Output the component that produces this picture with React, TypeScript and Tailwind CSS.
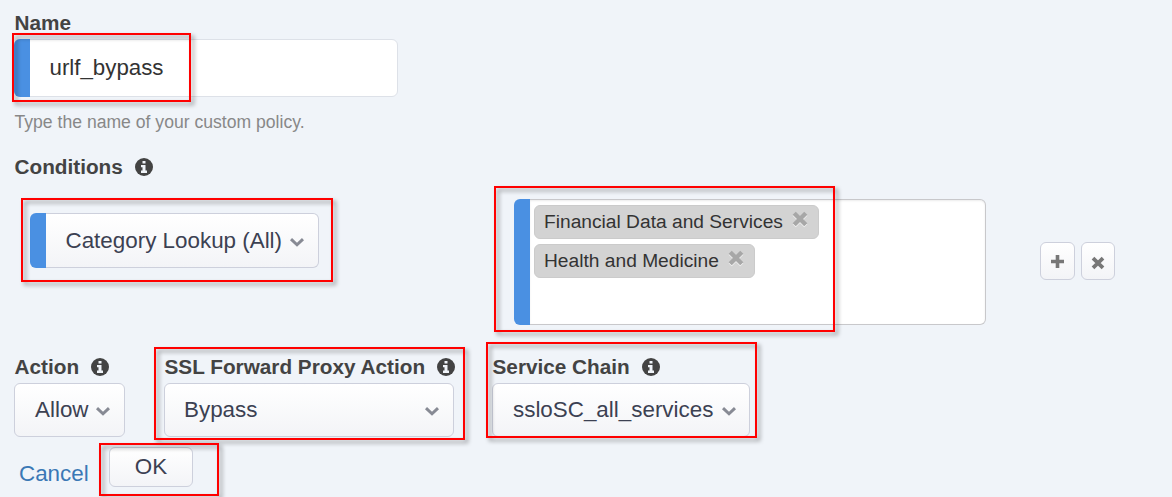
import type { ReactNode } from "react";

function Highlight({ className }: { className: string }) {
  return (
    <div
      className={`pointer-events-none absolute z-10 border-2 border-[#ff0000] drop-shadow-[3px_3px_2px_rgba(0,0,0,0.4)] ${className}`}
    />
  );
}

function InfoIcon() {
  return (
    <svg width="18" height="18" viewBox="0 0 18 18" className="-mt-px ml-[12px] shrink-0">
      <circle cx="9" cy="9" r="9" fill="#434343" />
      <path d="M7.5 3h3v2.5h-3zM6 7h4.5v5.6H12V15H6v-2.4h1.5V9.3H6z" fill="#f0f4f9" />
    </svg>
  );
}

function Label({ children, info = true }: { children: ReactNode; info?: boolean }) {
  return (
    <div className="flex h-6 items-center pl-[0.5px] whitespace-nowrap text-[20.75px] leading-6 font-bold text-[#434343]">
      <span>{children}</span>
      {info && <InfoIcon />}
    </div>
  );
}

function Chevron() {
  return (
    <svg width="14" height="9" viewBox="0 0 14 9" fill="none" className="mt-[3px] shrink-0">
      <path d="M1 1.2 7 6.8 13 1.2" stroke="#878a94" strokeWidth="3" />
    </svg>
  );
}

function Select({ label, className }: { label: string; className: string }) {
  return (
    <button
      className={`flex items-center justify-between rounded-md border border-[#cdd0dc] bg-linear-to-b from-white to-[#f3f4f7] text-[22.4px] whitespace-nowrap text-[#3c4152] ${className}`}
    >
      <span>{label}</span>
      <Chevron />
    </button>
  );
}

function Tag({ label, className }: { label: string; className: string }) {
  return (
    <div
      className={`flex h-[34px] items-center justify-between rounded-md border border-[#cbcbcb] bg-[#d3d3d3] pr-[10px] pl-[9px] text-[19.2px] whitespace-nowrap text-[#333] ${className}`}
    >
      <span>{label}</span>
      <svg
        width="16"
        height="16"
        viewBox="0 0 16 16"
        className="mb-[7px] drop-shadow-[0_1px_0_rgba(255,255,255,0.7)]"
      >
        <path d="M2.2 2.2 13.8 13.8M13.8 2.2 2.2 13.8" stroke="#a7a7a7" strokeWidth="4.4" />
      </svg>
    </div>
  );
}

function IconButton({ className, children }: { className: string; children: ReactNode }) {
  return (
    <button
      className={`flex h-[38px] items-center justify-center rounded-md border border-[#cdd0dc] bg-linear-to-b from-white to-[#f3f4f7] ${className}`}
    >
      {children}
    </button>
  );
}

export default function App() {
  return (
    <main className="h-[497px] w-[1172px] overflow-hidden bg-[#f0f4f9] pt-[11px] pl-[14px] font-['Liberation_Sans',Arial,sans-serif]">
      <Label info={false}>Name</Label>
      <div className="relative mt-1 flex h-[58px] w-[384px] overflow-visible rounded-md border border-[#dde1e8] bg-white">
        <div className="-my-px -ml-px w-4 rounded-l-md bg-[#4a90e2]" />
        <div className="flex items-center pb-px pl-[19.5px] text-[22.3px] text-[#333]">urlf_bypass</div>
        <Highlight className="-top-[7px] -left-[3px] h-[69px] w-[179px]" />
      </div>
      <div className="mt-[13px] h-6 pl-[0.5px] whitespace-nowrap text-[17.6px] leading-6 text-[#888]">
        Type the name of your custom policy.
      </div>
      <div className="mt-[21px]">
        <Label>Conditions</Label>
      </div>

      <div className="mt-5 flex h-[126px] items-start">
        <div className="relative mt-[14px] ml-4 flex h-[55px] w-[289px]">
          <div className="z-[1] w-4 rounded-l-md bg-[#4a90e2]" />
          <Select
            label="Category Lookup (All)"
            className="h-[55px] flex-1 rounded-l-none border-l-0 pr-[14px] pl-[19.5px]"
          />
          <Highlight className="-top-[15px] -left-[9px] h-[84px] w-[312px]" />
        </div>

        <div className="relative ml-[195px] flex h-[126px] w-[472px]">
          <div className="w-4 rounded-l-md bg-[#4a90e2]" />
          <div className="flex flex-1 flex-col gap-[5px] rounded-r-md border border-l-0 border-[#c8c8cb] bg-white pt-[5px] pl-1 shadow-[inset_0_1px_2px_rgba(0,0,0,0.08)]">
            <Tag label="Financial Data and Services" className="w-[285px]" />
            <Tag label="Health and Medicine" className="w-[221px]" />
          </div>
          <Highlight className="-top-[13px] -left-5 h-[146px] w-[341px]" />
        </div>

        <div className="mt-[43px] ml-[54px] flex gap-[6px]">
          <IconButton className="w-[35px]">
            <svg width="13" height="13" viewBox="0 0 13 13">
              <path d="M6.5 0V13M0 6.5H13" stroke="#777" strokeWidth="3.6" />
            </svg>
          </IconButton>
          <IconButton className="w-[34px]">
            <svg width="14" height="14" viewBox="0 0 14 14" className="mt-[3px]">
              <path d="M2 2.2 12 11.8M12 2.2 2 11.8" stroke="#777" strokeWidth="3.8" />
            </svg>
          </IconButton>
        </div>
      </div>

      <div className="mt-[30px] flex">
        <div className="w-[111px]">
          <Label>Action</Label>
          <Select label="Allow" className="mt-1 h-[54px] w-[111px] pr-[14px] pl-[20px]" />
        </div>
        <div className="relative ml-[39px] w-[290px]">
          <Label>SSL Forward Proxy Action</Label>
          <Select label="Bypass" className="mt-1 h-[54px] w-[290px] pr-[14px] pl-[19px]" />
          <Highlight className="-top-2 -left-[10px] h-[93px] w-[311px]" />
        </div>
        <div className="relative ml-[38px] w-[258px]">
          <Label>Service Chain</Label>
          <Select label="ssloSC_all_services" className="mt-1 h-[54px] w-[258px] pr-[13px] pl-[20px]" />
          <Highlight className="-top-[13px] -left-[6px] h-[96px] w-[271px]" />
        </div>
      </div>

      <div className="mt-[10px] flex">
        <a className="mt-[12px] ml-[5px] w-[90px] text-[22.4px] leading-[30px] text-[#3b78b5]">Cancel</a>
        <div className="relative">
          <button className="h-10 w-[84px] rounded-md border border-[#cdd0dc] bg-linear-to-b from-white to-[#f3f4f7] text-[22.4px] leading-[36px] text-[#3c4152]">
            OK
          </button>
          <Highlight className="-top-1 -left-[10px] h-[53px] w-[120px]" />
        </div>
      </div>
    </main>
  );
}
